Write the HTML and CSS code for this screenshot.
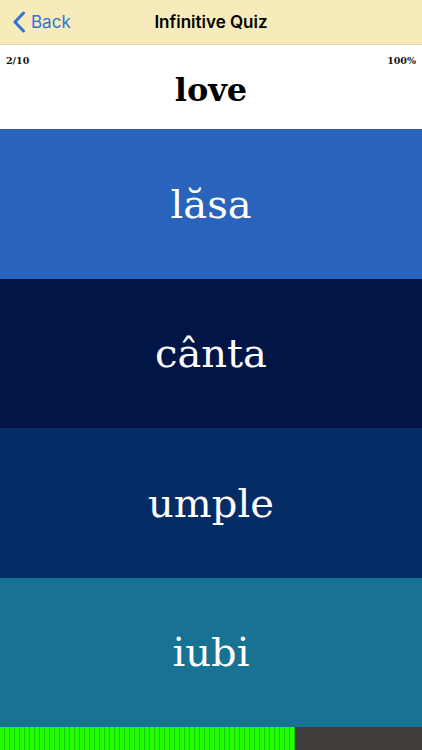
FILE: index.html
```html
<!DOCTYPE html>
<html>
<head>
<meta charset="utf-8">
<link rel="stylesheet" href="styles.css">
</head>
<body>
<div class="app">
  <header class="nav">
    <div class="back">
      <svg class="chev" width="14" height="22" viewBox="0 0 14 22"><path d="M11.5 2 L3 11 L11.5 20" fill="none" stroke="#2f72d8" stroke-width="3" stroke-linecap="round" stroke-linejoin="round"/></svg>
      <span>Back</span>
    </div>
    <div class="title">Infinitive Quiz</div>
  </header>
  <section class="prompt">
    <div class="stats"><span>2/10</span><span>100%</span></div>
    <div class="word">love</div>
  </section>
  <div class="opt o1">lăsa</div>
  <div class="opt o2">cânta</div>
  <div class="opt o3">umple</div>
  <div class="opt o4">iubi</div>
  <div class="progress"><div class="fill" style="width:70%"></div></div>
</div>
</body>
</html>
```
FILE: styles.css
```css
html, body { margin: 0; padding: 0; }
body { width: 422px; height: 750px; overflow: hidden; }
.app { display: flex; flex-direction: column; height: 750px; }
.nav {
  height: 44px; flex: none; background: #f7ebbb; border-bottom: 1px solid #e0d7b0;
  position: relative; display: flex; align-items: center;
  font-family: "Inter", "Liberation Sans", sans-serif;
}
.back { display: flex; align-items: center; gap: 5px; padding-left: 12px; color: #2f72d8; font-size: 17px; position: relative; z-index: 1; }
.chev { display: block; }
.title { position: absolute; left: 0; right: 0; text-align: center; font-size: 17px; font-weight: 600; color: #000; }
.prompt { height: 84px; flex: none; background: #fff; display: flex; flex-direction: column; font-family: "DejaVu Serif", serif; }
.stats { display: flex; justify-content: space-between; padding: 10px 6px 0; font-size: 9.5px; font-weight: bold; color: #111; }
.word { text-align: center; font-size: 32px; font-weight: bold; line-height: 36px; margin-top: 6px; color: #000; }
.opt { flex: 1; display: flex; align-items: center; justify-content: center; color: #fff; font-family: "DejaVu Serif", serif; font-size: 40px; }
.o1 { background: #2a63bb; }
.o2 { background: #011646; }
.o3 { background: #062c65; }
.o4 { background: #177293; }
.progress { height: 23px; flex: none; background: #403d3b; }
.fill { height: 100%; background: repeating-linear-gradient(90deg, #22ff00 0 4px, #17cf00 4px 5px); }
```
